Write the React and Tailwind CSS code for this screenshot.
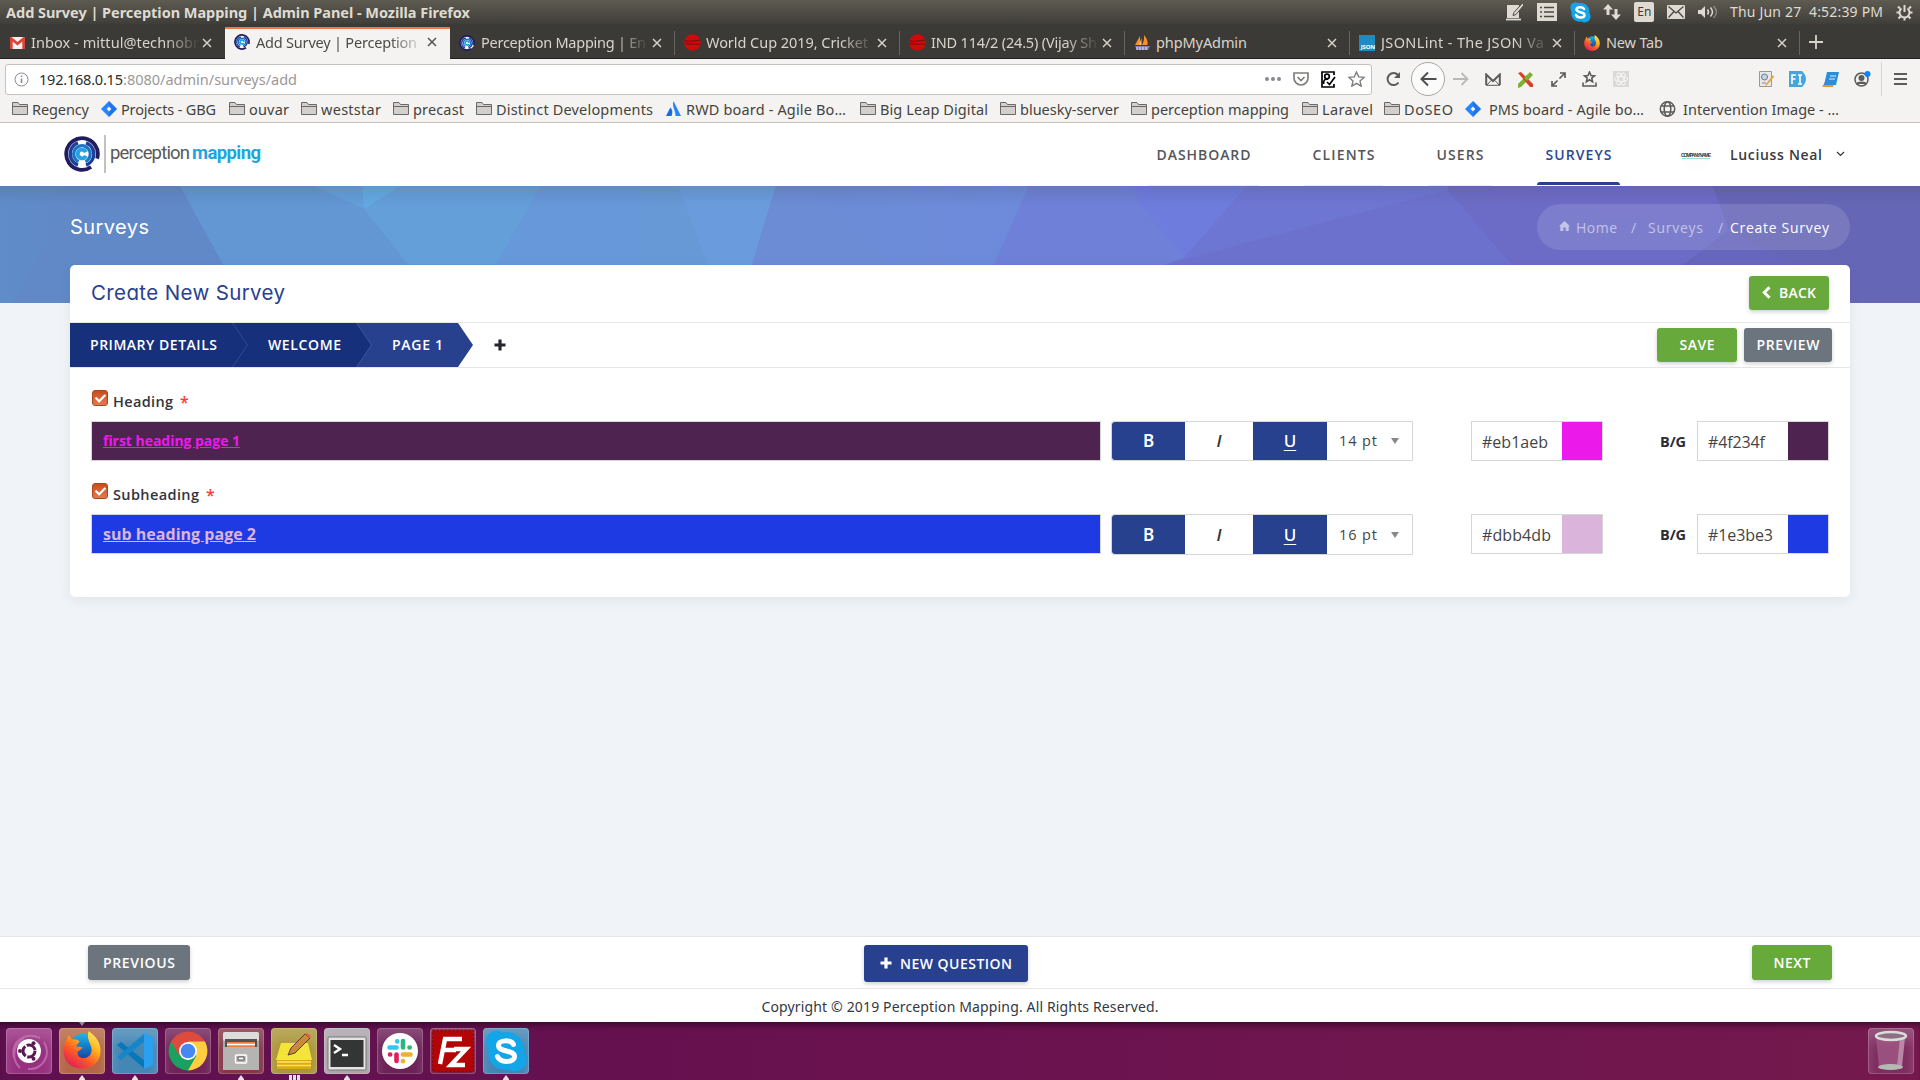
import React, { useLayoutEffect, useRef, useState } from "react";
import { FaCheck } from "react-icons/fa";

/* A single line of text whose tracking is computed so that it spans `w` pixels. */
function Fit({ w, className = "", children }) {
  const ref = useRef(null);
  const [ls, setLs] = useState(0);
  useLayoutEffect(() => {
    const natural = ref.current.getBoundingClientRect().width;
    setLs((w - natural) / Math.max(1, String(children).length - 1));
  }, [w, children]);
  return (
    <span className={`inline-block shrink-0 whitespace-pre ${className}`} style={{ width: w }}>
      <span ref={ref} style={{ letterSpacing: ls }}>{children}</span>
    </span>
  );
}

const UI = "font-['Noto_Sans','Open_Sans',sans-serif]";

/* ---------- small icons ---------- */
const Brand = ({ size = 16 }) => (
  <svg width={size} height={size} viewBox="0 0 36 36" fill="none">
    <circle cx="18" cy="18" r="16" fill="#fff" />
    <circle cx="18" cy="18" r="15.800" stroke="#211c5e" strokeWidth="3.800" pathLength="360" strokeDasharray="322 38" transform="rotate(55 18 18)" />
    <circle cx="18" cy="18" r="11.800" stroke="#1f3f9d" strokeWidth="3.400" pathLength="360" strokeDasharray="140 40" transform="rotate(-70 18 18)" />
    <circle cx="18" cy="18" r="8.300" stroke="#1b73c4" strokeWidth="3.200" pathLength="360" strokeDasharray="312 48" transform="rotate(114 18 18)" />
    <circle cx="18" cy="18" r="4.300" stroke="#24a3e0" strokeWidth="4" pathLength="360" strokeDasharray="310 50" transform="rotate(25 18 18)" />
  </svg>
);
const Folder = () => (
  <svg width="16" height="15" viewBox="0 0 16 15" fill="#d2cfcd" stroke="#6b6967">
    <path d="M.5 13.500V1.500h5.500l1.500 2H15.500v10z" />
    <path d="M.5 5.500h15" />
  </svg>
);
const Jira = () => (
  <svg width="16" height="16" viewBox="0 0 16 16">
    <path d="M8 0l8 8-8 8-8-8z" fill="#2684ff" />
    <path d="M8 0v5.500L5.500 8 8 10.500V16l8-8z" fill="#1668e3" opacity=".55" />
    <path d="M8 5.600L10.400 8 8 10.400 5.600 8z" fill="#f4f3f1" />
  </svg>
);
const Atlassian = () => (
  <svg width="15" height="15" viewBox="0 0 15 15" fill="#2684ff">
    <path d="M7.500 0L15 15H9.500C10 10 5.500 6 7.500 0z" />
    <path d="M4.300 6.500C7 9 6.500 12 5.500 15H0z" fill="#1a6be0" />
  </svg>
);
const Globe = () => (
  <svg width="17" height="16" viewBox="0 0 17 16" fill="none" stroke="#5c5b59" strokeWidth="1.500">
    <circle cx="8.500" cy="8" r="7.200" />
    <ellipse cx="8.500" cy="8" rx="3.300" ry="7.200" />
    <path d="M2 5h13M2 11h13" />
  </svg>
);
const Gmail = () => (
  <svg width="15" height="12" viewBox="0 0 15 12">
    <path d="M0 0h15v12H0z" fill="#f3f1ef" />
    <path d="M0 12V0h1.500l6 5 6-5H15v12h-2.700V4.500L7.500 8.500 2.700 4.500V12z" fill="#dc4437" />
  </svg>
);
const Ball = () => (
  <svg width="17" height="17" viewBox="0 0 17 17">
    <circle cx="8.500" cy="8.500" r="8.300" fill="#cf0a0a" />
    <path d="M1 6.500c5 2.500 9-1 15 0M1 9c5 2.500 10 0 15 1.500" stroke="#7c1010" fill="none" strokeWidth="1.100" />
  </svg>
);
const Pma = () => (
  <svg width="17" height="16" viewBox="0 0 17 16">
    <path d="M6 1v9H1zM10 0c3 3 4 7 3.500 10H8c1.500-3 2.500-6 2-10z" fill="#f7941d" />
    <path d="M7.500 3v7H5z" fill="#fbc77c" />
    <path d="M1 11h15l-2 4H3z" fill="#8484b4" />
    <path d="M3 12v3M6 12v3M9 12v3M12 12v3" stroke="#e6e6f5" />
  </svg>
);
const JsonIcon = () => (
  <div className="flex h-4 w-4 items-end justify-end bg-[#1e8bc3]">
    <span className="pb-px text-[6px] leading-none font-bold tracking-tight text-white">JSON</span>
  </div>
);
const Firefox = ({ size = 16 }) => (
  <svg width={size} height={size} viewBox="0 0 40 40">
    <defs>
      <linearGradient id="ffo" x1=".9" y1="0" x2=".2" y2="1">
        <stop offset="0" stopColor="#fff36b" />
        <stop offset=".35" stopColor="#ffb41c" />
        <stop offset=".65" stopColor="#ff5a26" />
        <stop offset="1" stopColor="#e0165c" />
      </linearGradient>
      <linearGradient id="ffb" x1="0" y1="0" x2="0" y2="1">
        <stop offset="0" stopColor="#16b5ee" />
        <stop offset="1" stopColor="#1b3b99" />
      </linearGradient>
    </defs>
    <circle cx="21" cy="17" r="14" fill="url(#ffb)" />
    <path d="M27 0c8 6 12.500 12 12.500 21 0 11-8.500 18.500-19.500 18.500S.5 32 .5 21c0-5 1.500-9 4-13l1-4 4 5c3-1 6 0 8 2l-4 5c3 0 4 1 7 1-1 3-4 3-5 5-1 4 3 7 7 6.500 6-.5 9-6.500 7-12.500-1-4-5-8-2.500-16z" fill="url(#ffo)" />
  </svg>
);
const Close = ({ dark }) => (
  <svg width="10" height="10" viewBox="0 0 10 10" fill="none" stroke={dark ? "#55534f" : "#d6d2cb"} strokeWidth="1.500">
    <path d="M1 1l8 8M9 1L1 9" />
  </svg>
);
const Plus = ({ className = "" }) => (
  <svg className={className} width="12" height="12" viewBox="0 0 12 12" fill="none" stroke="currentColor" strokeWidth="3.200">
    <path d="M6 .5v11M.5 6h11" />
  </svg>
);
const ChevronLeft = ({ className = "" }) => (
  <svg className={className} width="9" height="13" viewBox="0 0 9 13" fill="none" stroke="currentColor" strokeWidth="3">
    <path d="M7.500 1.200L2.300 6.500l5.200 5.300" />
  </svg>
);
const House = ({ className = "" }) => (
  <svg className={className} width="11" height="10" viewBox="0 0 11 10" fill="currentColor">
    <path d="M5.500 0L11 5.200H9.700V10H6.700V6.500H4.300V10H1.300V5.200H0z" />
  </svg>
);

/* ---------- desktop top panel ---------- */
function TopPanel() {
  return (
    <div className="flex h-6 shrink-0 items-center bg-linear-to-b from-[#5e5b51] to-[#403e39] pl-[6px] text-[#dfdbd2]">
      <Fit w={464} className={`${UI} -mt-px text-[14.500px] leading-6 font-bold`}>Add Survey | Perception Mapping | Admin Panel - Mozilla Firefox</Fit>
      <div className="ml-[1036px] flex w-[212px] items-center justify-between">
        <svg width="18" height="18" viewBox="0 0 18 18"><path d="M1 2h12v13H1z" fill="#dfdbd2" /><path d="M0 16.500h15" stroke="#dfdbd2" strokeWidth="1.800" /><path d="M16.500 0L8 9.500l-1 3 3-1L18 2z" fill="#dfdbd2" stroke="#4a4842" strokeWidth="1" /></svg>
        <svg width="20" height="18" viewBox="0 0 20 18"><path d="M0 0h20v18H0z" fill="#dfdbd2" /><path d="M3 4.500h2m2 0h10M3 9h2m2 0h10M3 13.500h2m2 0h10" stroke="#4a4842" strokeWidth="1.500" /></svg>
        <svg width="21" height="21" viewBox="0 0 42 42"><SkypeMark /></svg>
        <svg width="18" height="16" viewBox="0 0 18 16" fill="#dfdbd2"><path d="M5 0l5 5.500H6.500V11h-3V5.500H0zM13 16L8 10.500h3.500V5h3v5.500H18z" /></svg>
        <span className="flex h-5 w-5 items-center justify-center rounded-[2px] bg-[#dfdbd2] font-['Noto_Sans',sans-serif] text-[12px] leading-none text-[#3c3b37]">En</span>
        <svg width="18" height="14" viewBox="0 0 18 14"><rect width="18" height="14" rx="1" fill="#dfdbd2" /><path d="M1.500 1.500L9 8l7.500-6.500M1.500 12.500L7 6.500m9.500 6L11 6.500" fill="none" stroke="#4a4842" strokeWidth="1.300" /></svg>
        <svg width="20" height="14" viewBox="0 0 20 14" fill="none" stroke="#dfdbd2" strokeWidth="1.500"><path d="M0 5h3l4-4v12L3 9H0z" fill="#dfdbd2" stroke="none" /><path d="M9.500 4.500q2 2.500 0 5M12.500 2.500q4 4.500 0 9" /><path d="M15.500 1q6 6 0 12" opacity=".4" /></svg>
      </div>
      <Fit w={153} className={`${UI} ml-[12px] text-[14px] leading-6`}>Thu Jun 27  4:52:39 PM</Fit>
      <svg className="ml-[13px]" width="17" height="17" viewBox="0 0 17 17" fill="none" stroke="#dfdbd2"><path d="M5.500 4.500a5 5 0 1 0 6 0" strokeWidth="2" /><path d="M8.500 1v7" strokeWidth="2" /><path d="M3.500 8.500H.5M16.500 8.500h-3M4.500 12.500l-2 2M12.500 12.500l2 2M8.500 14v2.500M4 4.500l-2-2M13 4.500l2-2" strokeWidth="2" /></svg>
    </div>
  );
}

/* ---------- tabs ---------- */
const tabs = [
  { icon: <Gmail />, title: "Inbox - mittul@technobr", w: 168, fade: true },
  { icon: <Brand />, title: "Add Survey | Perception", w: 161, active: true, fade: true },
  { icon: <Brand />, title: "Perception Mapping | En", w: 165, fade: true },
  { icon: <Ball />, title: "World Cup 2019, Cricket", w: 162, fade: true },
  { icon: <Ball />, title: "IND 114/2 (24.5) (Vijay Sh", w: 166, fade: true },
  { icon: <Pma />, title: "phpMyAdmin", w: 91 },
  { icon: <JsonIcon />, title: "JSONLint - The JSON Va", w: 163, fade: true },
  { icon: <Firefox />, title: "New Tab", w: 57 },
];
function TabBar() {
  return (
    <div className="flex h-[35px] shrink-0 bg-[#3c3a36] shadow-[inset_0_-1px_0_#22211f]">
      {tabs.map((t, i) => (
        <div key={t.title} className={`flex w-[225px] shrink-0 items-center ${t.active ? "mt-[3px] border-t-2 border-[#f07746] bg-[#f4f3f1] pb-[5px] text-[#4c4a47]" : "pt-[3px] pb-px text-[#d8d4cc]"}`}>
          <span className="flex w-[31px] shrink-0 justify-center pl-[3px]">{t.icon}</span>
          <span className={`w-[172px] shrink-0 ${t.active ? "" : "-mt-[2px]"} ${t.fade ? "[mask-image:linear-gradient(to_right,#000_78%,transparent_98%)]" : ""}`}>
            <Fit w={t.w} className={`${UI} text-[14.500px] leading-6`}>{t.title}</Fit>
          </span>
          <span className="-ml-px"><Close dark={t.active} /></span>
          {i > 1 && <span className="ml-auto h-6 w-px bg-[#66645f]" />}
        </div>
      ))}
      <svg className="mt-[11px] ml-[9px]" width="14" height="14" viewBox="0 0 14 14" stroke="#d8d4cc" strokeWidth="1.800"><path d="M7 0v14M0 7h14" /></svg>
    </div>
  );
}

/* ---------- address bar ---------- */
const S = "#5c5b59";
function AddressBar() {
  return (
    <div className="flex h-10 shrink-0 items-center bg-[#f4f3f1] pl-[5px]">
      <div className="flex h-[31px] w-[1367px] shrink-0 items-center rounded-[3px] border border-[#c5c1bd] bg-white pl-[8px]">
        <svg width="15" height="15" viewBox="0 0 15 15" fill="none" stroke="#8f8d8a"><circle cx="7.500" cy="7.500" r="6.500" /><path d="M7.500 6.500v4.500M7.500 3.500V5" strokeWidth="1.600" /></svg>
        <span className={`${UI} ml-[10px] flex pt-px text-[14.500px] text-[#2e2c2a]`}>
          <Fit w={84}>192.168.0.15</Fit>
          <Fit w={174} className="text-[#9b9896]">:8080/admin/surveys/add</Fit>
        </span>
        <div className="ml-[968px] flex w-[100px] items-center justify-between">
          <svg width="16" height="4" viewBox="0 0 16 4" fill="#8b8987"><circle cx="2" cy="2" r="2" /><circle cx="8" cy="2" r="2" /><circle cx="14" cy="2" r="2" /></svg>
          <svg width="16" height="14" viewBox="0 0 16 14" fill="none" stroke="#807e7b" strokeWidth="1.700"><path d="M1 1h14v5a7 7 0 0 1-14 0z" /><path d="M4.500 5L8 8.500 11.500 5" /></svg>
          <svg width="15" height="17" viewBox="0 0 15 17" fill="none" stroke="#000" strokeWidth="1.700"><path d="M13 4V1H1v15h12v-3" /><circle cx="6" cy="5.500" r="2.300" /><path d="M2.500 13c0-5 2-5 4.500-5M6 11l2.500 2.500L14 6" /></svg>
          <svg width="17" height="16" viewBox="0 0 17 16" fill="none" stroke="#807e7b" strokeWidth="1.400"><path d="M8.500 1l2.200 4.900 5.300.5-4 3.600 1.200 5.200-4.700-2.800-4.700 2.800L5 10 1 6.400l5.300-.5z" /></svg>
        </div>
      </div>
      <svg className="ml-[13px]" width="16" height="16" viewBox="0 0 16 16" fill="none" stroke={S} strokeWidth="2"><path d="M13.500 11.500a6 6 0 1 1-.5-7.500" /><path d="M15 1v6H9z" fill={S} stroke="none" /></svg>
      <span className="ml-[10px] flex size-[34px] items-center justify-center rounded-full border border-[#aaa7a3] bg-[#fbfbfb]">
        <svg width="17" height="16" viewBox="0 0 17 16" fill="none" stroke="#504f4d" strokeWidth="2"><path d="M16.500 8H2M8 1.500L1.500 8 8 14.500" /></svg>
      </span>
      <svg className="ml-[8px]" width="16" height="14" viewBox="0 0 16 14" fill="none" stroke="#bbb9b6" strokeWidth="1.800"><path d="M0 7h14M8.500 1L14.500 7l-6 6" /></svg>
      <div className="ml-[16px] flex w-[144px] items-center justify-between">
        <svg width="16" height="13" viewBox="0 0 16 13" fill="none" stroke={S} strokeWidth="2"><path d="M1.200 12V1.500L8 8l6.800-6.500V12" /><path d="M1 12.300h14M2 12l4-4.500M14 12l-4-4.500" strokeWidth="1" /></svg>
        <svg width="17" height="17" viewBox="0 0 17 17"><path d="M1 13L13 1l3 3L4 16l-3 1z" fill="#7ab12f" /><path d="M1 2l3-1 12 12v3h-3z" fill="#d8402e" /><path d="M7 7l3-3 3 3-3 3z" fill="#7ab12f" /></svg>
        <svg width="15" height="15" viewBox="0 0 15 15" fill="none" stroke={S} strokeWidth="1.700"><path d="M8.500 6.500L14 1M9 1h5v5M6.500 8.500L1 14M1 9v5h5" /></svg>
        <svg width="15" height="16" viewBox="0 0 15 16" fill="none" stroke={S} strokeWidth="1.600"><path d="M7.500 1l1.500 3.500 3.500.3-2.700 2.300.8 3.700-3.100-2-3.100 2 .8-3.700L2.500 4.800 6 4.500zM1 11.500V15h13v-3.500" /></svg>
        <svg width="16" height="16" viewBox="0 0 16 16" fill="none" stroke="#f7f6f5" strokeWidth="1"><rect width="16" height="16" fill="#dbd9d7" stroke="none" /><ellipse cx="8" cy="8" rx="6.500" ry="2.600" /><ellipse cx="8" cy="8" rx="6.500" ry="2.600" transform="rotate(60 8 8)" /><ellipse cx="8" cy="8" rx="6.500" ry="2.600" transform="rotate(120 8 8)" /></svg>
      </div>
      <div className="ml-[130px] flex w-[112px] items-center justify-between">
        <svg width="15" height="16" viewBox="0 0 15 16"><path d="M.5.500h12v15H.5z" fill="#e8e8e6" stroke="#999" /><circle cx="5.500" cy="6" r="3" fill="#bcd8f0" stroke="#777" /><path d="M14 4L7 13l-1 2 2-1 7-8z" fill="#e8a03a" /><path d="M3 12h4" stroke="#888" /></svg>
        <svg width="17" height="16" viewBox="0 0 17 16"><path d="M0 0h13q4 4 4 8t-4 8H0z" fill="#45a6dd" /><path d="M3 13V4h4M3 8h3.500M9 4h4M11 4v9M9 13h4" stroke="#fff" strokeWidth="1.600" fill="none" /></svg>
        <svg width="17" height="15" viewBox="0 0 17 15"><path d="M0 15l3-5h9l-1 5z" fill="#f0932b" /><path d="M5 0h12l-3 13H2z" fill="#2a8fd8" /><path d="M8 4h6M7 7h6" stroke="#9ed0f5" strokeWidth="1.300" /></svg>
        <svg width="17" height="16" viewBox="0 0 17 16" fill="none" stroke={S} strokeWidth="1.500"><circle cx="7.500" cy="8.500" r="6.500" /><circle cx="7.500" cy="7" r="3" fill={S} stroke="none" /><path d="M3 13c1-2.500 8-2.500 9 0" fill={S} /><circle cx="13.500" cy="3" r="3" fill="#0a84ff" stroke="none" /></svg>
      </div>
      <span className="ml-[10px] h-[34px] w-px bg-[#d9d6d3]" />
      <svg className="ml-[12px]" width="13" height="12" viewBox="0 0 13 12" stroke={S} strokeWidth="1.800"><path d="M0 1h13M0 6h13M0 11h13" /></svg>
    </div>
  );
}

/* ---------- bookmarks ---------- */
const bookmarks = [
  [<Folder />, "Regency", "w-[89px]", 57],
  [<Jira />, "Projects - GBG", "w-[128px]", 95],
  [<Folder />, "ouvar", "w-[72px]", 40],
  [<Folder />, "weststar", "w-[92px]", 60],
  [<Folder />, "precast", "w-[83px]", 51],
  [<Folder />, "Distinct Developments", "w-[190px]", 157],
  [<Atlassian />, "RWD board - Agile Bo…", "w-[194px]", 160],
  [<Folder />, "Big Leap Digital", "w-[140px]", 108],
  [<Folder />, "bluesky-server", "w-[131px]", 99],
  [<Folder />, "perception mapping", "w-[171px]", 138],
  [<Folder />, "Laravel", "w-[82px]", 51],
  [<Folder />, "DoSEO", "w-[81px]", 49],
  [<Jira />, "PMS board - Agile bo…", "w-[194px]", 155, true],
  [<Globe />, "Intervention Image - …", "w-[190px]", 156, true],
];
function Bookmarks() {
  return (
    <div className="flex h-6 shrink-0 items-center border-b border-[#c3bfbb] bg-[#f4f3f1] pb-[4px] pl-[12px] text-[#45433f]">
      {bookmarks.map(([icon, label, cls, w, wide]) => (
        <div key={label} className={`flex shrink-0 items-center ${cls}`}>
          <span className={`flex shrink-0 ${wide ? "w-[24px]" : "w-[20px]"}`}>{icon}</span>
          <Fit w={w} className={`${UI} text-[14.500px] leading-5`}>{label}</Fit>
        </div>
      ))}
    </div>
  );
}

/* ---------- site header ---------- */
const navItems = [
  ["DASHBOARD", 94, "w-[111px]"],
  ["CLIENTS", 62, "w-[79px]"],
  ["USERS", 47, "w-[64px]"],
];
function SiteHeader() {
  return (
    <header className="flex h-[63px] shrink-0 bg-white pl-[64px]">
      <div className="mt-[12px] flex h-[38px] items-center">
        <Brand size={36} />
        <span className="ml-[4px] h-[38px] w-[2px] bg-[#c2c2c2]" />
        <span className="ml-[4px] flex pb-px font-['Roboto',sans-serif] text-[18.500px] leading-none">
          <Fit w={80} className="mr-[2px] text-[#58585a]">perception</Fit>
          <Fit w={69} className="font-bold text-[#1ea5e0]">mapping</Fit>
        </span>
      </div>
      <nav className="ml-[887px] flex gap-[45px] pt-[20px] font-['Open_Sans','Noto_Sans',sans-serif] text-[14px] leading-6 font-semibold text-[#55555a]">
        {navItems.map(([label, w, cls]) => (
          <div key={label} className={`flex flex-col items-center justify-between ${cls}`}>
            <Fit w={w}>{label}</Fit>
            <span className="h-px w-full bg-[#ececf0]" />
          </div>
        ))}
        <div className="flex w-[83px] flex-col items-center justify-between pb-px text-[#2b4794]">
          <Fit w={66}>SURVEYS</Fit>
          <span className="h-[3px] w-full rounded-t-[3px] bg-[#27418f]" />
        </div>
      </nav>
      <div className="mt-[15px] ml-[60px] flex h-8 items-center">
        <div className="flex size-8 flex-col items-center justify-center rounded-full bg-[#fdfdfd] pt-[2px]">
          <Fit w={30} className="font-['Liberation_Sans_Narrow','Liberation_Sans',sans-serif] text-[5px] leading-[6px] font-bold text-[#3a3a3a]">COMPANY NAME</Fit>
          <span className="h-px w-[28px] bg-[#9fe0cd]" />
        </div>
        <Fit w={92} className="ml-[18px] font-['Open_Sans','Noto_Sans',sans-serif] text-[14px] font-semibold text-[#3a3a40]">Luciuss Neal</Fit>
        <svg className="ml-[14px]" width="9" height="6" viewBox="0 0 9 6" fill="none" stroke="#333" strokeWidth="1.200"><path d="M1 1l3.500 3.500L8 1" /></svg>
      </div>
    </header>
  );
}

const BannerArt = () => (
  <svg className="block" width="1920" height="117" viewBox="0 186 1920 117" preserveAspectRatio="none">
    <defs>
      <linearGradient id="base" x1="0" x2="1"><stop offset="0" stopColor="#5f8dc9" /><stop offset=".1" stopColor="#6188c6" /></linearGradient>
      <linearGradient id="mid" x1="0" x2="1"><stop offset="0" stopColor="#6b8cd4" /><stop offset="1" stopColor="#6d8adb" /></linearGradient>
      <linearGradient id="shade" x1="0" y1="0" x2="0" y2="1"><stop offset="0" stopColor="#334" stopOpacity=".13" /><stop offset="1" stopColor="#334" stopOpacity="0" /></linearGradient>
    </defs>
    <path d="M0 186h1040v117H0z" fill="url(#base)" />
    <path d="M1040 186h880v117h-880z" fill="#6e74d1" />
    <path d="M82 186H300V303H12z" fill="#6189c8" />
    <path d="M180 186H520V303H244z" fill="#6297d3" />
    <path d="M314 186H362L364 209z" fill="#629fda" />
    <path d="M362 186H401L364 209z" fill="#62aae4" />
    <path d="M401 186H541L474 303H438L364 209z" fill="#649fda" />
    <path d="M541 186H776L740 303H474z" fill="#6798da" />
    <path d="M640 186h38l30 79h-68z" fill="#6799d6" />
    <path d="M678 186H776L752 265H708z" fill="#6a9cdd" />
    <path d="M776 186H1029L994 265H752z" fill="url(#mid)" />
    <path d="M776 186H808L890 265H752z" fill="#6c8cd5" />
    <path d="M1029 186H1200L1184 258L1164 265H994z" fill="#6e80d7" />
    <path d="M1134 186H1247L1184 258L1140 205z" fill="#6e7cdd" />
    <path d="M1247 186H1448V190L1280 234L1184 258z" fill="#6e76d4" />
    <path d="M1164 265L1280 234L1448 190L1512 265z" fill="#6d71ce" />
    <path d="M1448 186H1720L1729 230L1683 265H1512L1448 190z" fill="#6d6bc7" />
    <path d="M1448 190L1729 232L1683 265H1512z" fill="#6c6cc6" />
    <path d="M1713 186H1920V303H1683V265L1729 230z" fill="#6665b7" />
    <path d="M1798 186H1920V303H1850V290L1729 230z" fill="#6566b6" />
    <path d="M1683 265L1729 230L1800 265z" fill="#6766bd" />
    <path d="M0 186h1920v20H0z" fill="url(#shade)" />
  </svg>
);

const BTN = "flex items-center justify-center rounded-[3px] pb-px font-['Open_Sans','Noto_Sans',sans-serif] text-[14px] font-semibold text-white shadow-[0_2px_4px_rgba(0,0,0,0.18)]";

/* ---------- survey card ---------- */
function Steps() {
  return (
    <div className="flex h-[44px] font-['Open_Sans','Noto_Sans',sans-serif] text-[14px] leading-[44px] font-semibold text-white">
      <div className="z-30 flex w-[178px] shrink-0 bg-[#2f4c92] [clip-path:polygon(0_0,163px_0,100%_50%,163px_100%,0_100%)]">
        <div className="w-[177px] bg-[#17307b] pl-[20px] [clip-path:polygon(0_0,162px_0,100%_50%,162px_100%,0_100%)]"><Fit w={127}>PRIMARY DETAILS</Fit></div>
      </div>
      <div className="z-20 -ml-[16px] flex w-[140px] shrink-0 bg-[#3a579b] [clip-path:polygon(0_0,125px_0,100%_50%,125px_100%,0_100%,15px_50%)]">
        <div className="w-[139px] bg-[#17307b] pl-[36px] [clip-path:polygon(0_0,124px_0,100%_50%,124px_100%,0_100%,15px_50%)]"><Fit w={73}>WELCOME</Fit></div>
      </div>
      <div className="-ml-[16px] w-[117px] shrink-0 bg-[#27418f] pl-[36px] [clip-path:polygon(0_0,102px_0,100%_50%,102px_100%,0_100%,15px_50%)]"><Fit w={51}>PAGE 1</Fit></div>
    </div>
  );
}

function ColorField({ value, w, swatch }) {
  return (
    <div className="flex h-[40px] w-[132px] shrink-0 items-center border border-[#d6d6d6] pl-[10px]">
      <Fit w={w} className="pt-px font-['Open_Sans','Noto_Sans',sans-serif] text-[16px] text-[#444]">{value}</Fit>
      <span className={`ml-auto h-full w-[40px] ${swatch}`} />
    </div>
  );
}

function FieldRow({ label, labelW, text, textCls, textW, fg, fgW, fgCls, bg, bgW, bgCls, size, groupH }) {
  return (
    <div className="h-[93px]">
      <div className="flex h-[31px] items-start pl-[1px]">
        <span className="flex size-4 items-center justify-center rounded-[3px] border border-[#a8481f] bg-linear-to-b from-[#cb4c17] to-[#e27b50]"><FaCheck size={11} color="#fff" /></span>
        <Fit w={labelW} className="ml-[5px] font-['Open_Sans','Noto_Sans',sans-serif] text-[14.500px] leading-6 font-semibold text-[#33343d]">{label}</Fit>
        <span className="ml-[7px] font-['Open_Sans',sans-serif] text-[16px] leading-6 font-semibold text-[#fb3a3a]">*</span>
      </div>
      <div className="flex items-start">
        <div className={`flex h-[40px] w-[1010px] shrink-0 items-center border border-[#d6d6d6] pb-px pl-[11px] ${bgCls}`}>
          <Fit w={textW} className={`font-['Open_Sans','Noto_Sans',sans-serif] font-bold ${textCls}`}>{text}</Fit>
        </div>
        <div className={`ml-[10px] flex w-[302px] shrink-0 items-stretch rounded-l-[3px] border border-[#d6d6d6] font-['Noto_Sans',sans-serif] text-[17px] font-semibold ${groupH}`}>
          <span className="flex w-[73px] items-center justify-center rounded-l-[3px] bg-[#27418f] text-white">B</span>
          <span className="flex w-[68px] items-center justify-center font-['Open_Sans',sans-serif] text-[#333] italic">I</span>
          <span className="flex w-[74px] items-center justify-center bg-[#27418f] font-medium text-white underline underline-offset-[3px]">U</span>
          <span className="flex items-center pl-[12px] font-['Open_Sans',sans-serif] font-normal text-[#444]">
            <Fit w={38} className="text-[14.500px]">{size}</Fit>
            <svg className="ml-[14px]" width="8" height="6" viewBox="0 0 8 6" fill="#888"><path d="M0 0h8L4 6z" /></svg>
          </span>
        </div>
        <div className="ml-[58px]"><ColorField value={fg} w={fgW} swatch={fgCls} /></div>
        <Fit w={26} className="ml-[57px] self-center pt-px font-['Open_Sans',sans-serif] text-[14.500px] font-bold text-[#2b2c35]">B/G</Fit>
        <div className="ml-[11px]"><ColorField value={bg} w={bgW} swatch={bgCls} /></div>
      </div>
    </div>
  );
}

function Card() {
  return (
    <section className="relative mx-[70px] -mt-[38px] h-[332px] rounded-[5px] bg-white shadow-[0_3px_12px_rgba(60,70,90,0.09)]">
      <div className="flex h-[58px] items-center border-b border-[#e6e6e6] pr-[21px] pl-[21px]">
        <Fit w={194} className="font-['Inter',sans-serif] text-[20.500px] text-[#27418f] [font-feature-settings:'cv11','ss03']">Create New Survey</Fit>
        <button className={`${BTN} mb-[2px] ml-auto h-[34px] w-[80px] bg-[#67a93b]`}><ChevronLeft className="mr-[8px]" /><Fit w={37}>BACK</Fit></button>
      </div>
      <div className="flex h-[45px] items-center border-b border-[#e6e6e6] pr-[18px]">
        <Steps />
        <Plus className="ml-[21px] text-[#25262e]" />
        <button className={`${BTN} ml-auto h-[34px] w-[80px] bg-[#67a93b]`}><Fit w={35}>SAVE</Fit></button>
        <button className={`${BTN} ml-[7px] h-[34px] w-[88px] bg-[#6c757d]`}><Fit w={63}>PREVIEW</Fit></button>
      </div>
      <div className="pt-[22px] pl-[21px]">
        <FieldRow label="Heading" labelW={60} text="first heading page 1" textW={137} textCls="text-[14px] text-[#eb1aeb] underline" fg="#eb1aeb" fgW={66} fgCls="bg-[#eb1aeb]" bg="#4f234f" bgW={57} bgCls="bg-[#4f234f]" size="14 pt" groupH="h-[40px]" />
        <FieldRow label="Subheading" labelW={86} text="sub heading page 2" textW={153} textCls="text-[16px] text-[#dbb4db] underline" fg="#dbb4db" fgW={69} fgCls="bg-[#dbb4db]" bg="#1e3be3" bgW={65} bgCls="bg-[#1e3be3]" size="16 pt" groupH="h-[41px]" />
      </div>
    </section>
  );
}

function Page() {
  return (
    <main className="flex h-[899px] shrink-0 flex-col bg-[#f0f4f8]">
      <SiteHeader />
      <div className="grid shrink-0">
        <div className="col-start-1 row-start-1"><BannerArt /></div>
        <div className="z-10 col-start-1 row-start-1 flex h-[64px] items-start justify-between pt-[18px] pr-[70px] pl-[70px]">
          <Fit w={79} className="pt-[8px] font-['Inter',sans-serif] text-[20px] text-white">Surveys</Fit>
          <div className="flex h-[46px] w-[313px] items-center rounded-full bg-white/12 pl-[22px] font-['Open_Sans','Noto_Sans',sans-serif] text-[14px] text-[#c3c4e6]">
            <House className="-mt-[3px]" />
            <Fit w={41} className="ml-[6px]">Home</Fit>
            <span className="ml-[14px] w-[17px]">/</span>
            <Fit w={55}>Surveys</Fit>
            <span className="ml-[15px] w-[12px]">/</span>
            <Fit w={99} className="text-white">Create Survey</Fit>
          </div>
        </div>
      </div>
      <Card />
      <footer className="mt-auto flex flex-col">
        <div className="flex h-[53px] items-start border-y border-[#e6e6e6] bg-white pt-[8px] pl-[88px]">
          <button className={`${BTN} h-[35px] w-[102px] bg-[#6c757d]`}><Fit w={72}>PREVIOUS</Fit></button>
          <button className={`${BTN} ml-[674px] h-[37px] w-[164px] bg-[#27418f]`}><Plus className="mr-[8px]" /><Fit w={112}>NEW QUESTION</Fit></button>
          <button className={`${BTN} ml-[724px] h-[35px] w-[80px] bg-[#67a93b]`}><Fit w={37}>NEXT</Fit></button>
        </div>
        <div className="flex h-[33px] items-center justify-center bg-white pt-[2px]">
          <Fit w={397} className="font-['Noto_Sans','Open_Sans',sans-serif] text-[14px] text-[#333842]">Copyright © 2019 Perception Mapping. All Rights Reserved.</Fit>
        </div>
      </footer>
    </main>
  );
}

/* ---------- dock ---------- */
function SkypeMark() {
  return (
    <>
      <path d="M3 4C8-1 14 0 17 2c13-2 23 7 22 20 4 6 2 13-2 16-4 3-9 4-14 1C10 41 1 31 3 19 0 14 0 8 3 4z" fill="#12a5e8" />
      <path d="M28 14c-2-5-15-5-15 1 0 7 16 4 16 11 0 6-14 7-17 0" fill="none" stroke="#fff" strokeWidth="5" strokeLinecap="round" />
    </>
  );
}
const dock = [
  { bg: "bg-[#97307f]", art: <><g fill="none" stroke="#c77bb6" strokeWidth="2" opacity=".7"><path d="M8 30C4 12 20 4 34 10M38 14c8 14-2 28-16 27M14 40C4 30 8 16 18 10" /></g><circle cx="23" cy="23" r="12" fill="#fff" /><circle cx="23" cy="23" r="6" fill="none" stroke="#5a1950" strokeWidth="3" strokeDasharray="11 1.560" /><g fill="#5a1950"><circle cx="14" cy="23" r="2" /><circle cx="27.500" cy="15.200" r="2" /><circle cx="27.500" cy="30.800" r="2" /></g></> },
  { bg: "bg-[#b46747]", up: true, mark: "one", art: <svg x="4" y="3" width="40" height="42"><Firefox size={38} /></svg> },
  { bg: "bg-[#4486b4]", mark: "one", art: <><path d="M5 17l4-3 24 19v8z" fill="#0877b9" /><path d="M5 29l4 3L33 13V5z" fill="#1586ca" /><path d="M32 5l9 4v28l-9 4z" fill="#2ba0ee" /></> },
  { bg: "bg-[#702259]", art: <><path d="M23 13.300h16.800A19.400 19.400 0 0 1 23 42.400z" fill="#ffcd40" /><path d="M6.200 13.300A19.400 19.400 0 0 0 23 42.400l8.400-14.600L23 23z" fill="#1aa15f" /><path d="M39.800 13.300A19.400 19.400 0 0 0 6.200 13.300l8.400 14.600L23 13.300z" fill="#dd4b3e" /><circle cx="23" cy="23" r="9" fill="#fff" /><circle cx="23" cy="23" r="7.300" fill="#4688f1" /></> },
  { bg: "bg-[#853648]", mark: "one", art: <><rect x="5" y="4" width="36" height="38" rx="2" fill="#aaa9a7" /><rect x="5" y="4" width="36" height="9" rx="2" fill="#dddcda" /><rect x="7" y="11" width="32" height="9" fill="#55524f" /><path d="M9 14h28v6H9z" fill="#e9804a" /><path d="M9 16.500h28" stroke="#fff" strokeWidth="1.500" /><rect x="5" y="19" width="36" height="23" fill="#b5b4b3" /><rect x="17.500" y="27" width="11" height="8" rx="1" fill="none" stroke="#fff" strokeWidth="1.500" /><path d="M20 29h6v3h-6z" fill="#fff" stroke="#555" /></> },
  { bg: "bg-[#aa9639]", mark: "three", art: <><path d="M6 31h34v10H6z" fill="#dca90f" /><path d="M6 34h34M6 37.500h34" stroke="#ffe268" strokeWidth="1.500" /><path d="M10 15h27l4 17H5z" fill="#f4e43a" /><path d="M17 27l3-7L34 6l5 4-15 15z" fill="#c98a3d" stroke="#57402a" /><path d="M34 6l2-1 4 3-1.500 2z" fill="#e5604c" /></> },
  { bg: "bg-[#aca3ab]", mark: "one", art: <><rect x="4" y="9" width="38" height="33" rx="1" fill="#e4e4e2" stroke="#777" /><rect x="6.500" y="12" width="33" height="27" fill="#333634" /><path d="M10 17l6 4-6 4M18 27h6" fill="none" stroke="#fff" strokeWidth="2.400" /></> },
  { bg: "bg-[#6c2157]", art: <><circle cx="23" cy="23" r="18" fill="#fff" /><g strokeLinecap="round" strokeWidth="4.600" fill="none"><path d="M12.500 19.500h7M20.200 13.300v.2" stroke="#36c5f0" /><path d="M26 13v6.500M32.500 19.500h.2" stroke="#2eb67d" /><path d="M26 26.500h7.500M26 33v.2" stroke="#ecb22e" /><path d="M19.500 33v-6.500M13 26.500h.2" stroke="#e01e5a" /></g></> },
  { bg: "bg-[#7a1f4f]", art: <><rect x="2.500" y="2.500" width="41" height="41" fill="#b30505" stroke="#8d0202" strokeWidth="1.500" strokeDasharray="2 2" /><path d="M10 36L15 11h17M12 22h14M24 21h12L21 37h14" fill="none" stroke="#fff" strokeWidth="4.500" /></> },
  { bg: "bg-[#4585b4]", mark: "one", art: <g transform="translate(2.500 2.500)"><SkypeMark /></g> },
];
const trash = <><path d="M8 9h29l-3 30H11z" fill="#a35c8a" opacity=".75" /><path d="M32 10l-3 28h5l3-28z" fill="#d2b5c8" opacity=".55" /><ellipse cx="22.500" cy="39" rx="12.500" ry="3" fill="#b4b9b2" /><ellipse cx="23" cy="8" rx="15" ry="4" fill="#8c6f82" stroke="#d9dcd7" strokeWidth="2.500" /></>;

function Tile({ item }) {
  return (
    <div className="flex w-[53px] shrink-0 flex-col items-start">
      <span className="flex h-[6px] w-[46px] justify-center">{item.up && <svg width="6" height="4" viewBox="0 0 6 4" fill="#918a90"><path d="M0 0h6L3 4z" /></svg>}</span>
      <div className={`h-[46px] w-[46px] rounded-[4px] shadow-[inset_0_0_0_1px_rgba(255,255,255,0.18),inset_0_12px_12px_rgba(255,255,255,0.18)] ${item.bg}`}>
        <svg width="46" height="46" viewBox="0 0 46 46">{item.art}</svg>
      </div>
      <span className="flex h-[6px] w-[46px] items-end justify-center">
        {item.mark === "one" && <svg width="6" height="5" viewBox="0 0 6 5" fill="#e4dfe3"><path d="M3 0l3 4v1H0V4z" /></svg>}
        {item.mark === "three" && <svg width="11" height="5" viewBox="0 0 11 5" fill="#e4dfe3"><path d="M0 0h3v5H0zM4 0h3v5H4zM8 0h3v5H8z" /></svg>}
      </span>
    </div>
  );
}
function Dock() {
  return (
    <div className="flex h-[58px] shrink-0 bg-linear-to-r from-[#5f104f] via-[#6a124f] to-[#75194e] pl-[6px] shadow-[inset_0_6px_6px_-3px_rgba(30,0,25,0.6)]">
      {dock.map((d, i) => <Tile key={i} item={d} />)}
      <div className="mr-[-1px] ml-auto"><Tile item={{ bg: "bg-[#7f2c60]", art: trash }} /></div>
    </div>
  );
}

export default function App() {
  return (
    <div className="flex h-[1080px] w-[1920px] flex-col overflow-hidden font-['Noto_Sans','Open_Sans',sans-serif]">
      <TopPanel />
      <TabBar />
      <AddressBar />
      <Bookmarks />
      <Page />
      <Dock />
    </div>
  );
}
